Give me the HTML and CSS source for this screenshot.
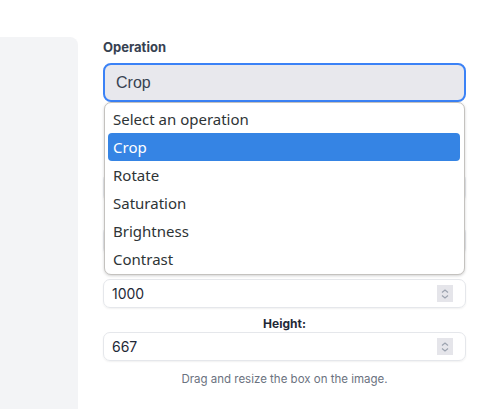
FILE: index.html
```html
<!DOCTYPE html>
<html>
<head>
<meta charset="utf-8">
<link rel="stylesheet" href="styles.css">
</head>
<body>
<div class="page">
  <div class="preview"></div>
  <div class="panel">
    <div class="field-op">
      <div class="op-label">Operation</div>
      <div class="select-wrap">
        <div class="select">Crop</div>
        <ul class="menu">
          <li class="opt">Select an operation</li>
          <li class="opt active">Crop</li>
          <li class="opt">Rotate</li>
          <li class="opt">Saturation</li>
          <li class="opt">Brightness</li>
          <li class="opt">Contrast</li>
        </ul>
      </div>
    </div>
    <div class="fields">
      <div class="group">
        <div class="label"></div>
        <div class="input"></div>
      </div>
      <div class="group">
        <div class="label"></div>
        <div class="input"></div>
      </div>
      <div class="group">
        <div class="label">Width:</div>
        <div class="input"><span>1000</span><span class="spin"><svg viewBox="0 0 16 16" width="16" height="16"><path d="M5 6.5 8 4 11 6.5M5 9.5 8 12 11 9.5" fill="none" stroke="#9ca3af" stroke-width="1.2"/></svg></span></div>
      </div>
      <div class="group">
        <div class="label">Height:</div>
        <div class="input"><span>667</span><span class="spin"><svg viewBox="0 0 16 16" width="16" height="16"><path d="M5 6.5 8 4 11 6.5M5 9.5 8 12 11 9.5" fill="none" stroke="#9ca3af" stroke-width="1.2"/></svg></span></div>
      </div>
      <p class="help">Drag and resize the box on the image.</p>
    </div>
  </div>
</div>
</body>
</html>
```

FILE: styles.css
```css
html, body {
  margin: 0;
  padding: 0;
  background: #ffffff;
  font-family: Inter, "Liberation Sans", sans-serif;
}
.page {
  display: flex;
  height: 409px;
  overflow: hidden;
}
.preview {
  width: 78px;
  margin-top: 37px;
  background: #f3f4f6;
  border-top-right-radius: 8px;
  flex: none;
}
.panel {
  width: 363px;
  margin-left: 25px;
  padding-top: 40px;
  flex: none;
}
.op-label {
  font-size: 13px;
  line-height: 14px;
  font-weight: 700;
  color: #374151;
  margin-bottom: 9px;
}
.select-wrap {
  position: relative;
}
.select {
  height: 35px;
  border: 2px solid #3b82f6;
  border-radius: 8px;
  background: #e8e8ed;
  font-family: "Liberation Sans", Arial, sans-serif;
  font-size: 16px;
  line-height: 35px;
  padding-left: 11px;
  color: #374151;
}
.menu {
  position: absolute;
  z-index: 5;
  left: 1px;
  top: 39px;
  width: 361px;
  margin: 0;
  padding: 2px 4px 2px 3px;
  list-style: none;
  background: #ffffff;
  border: 1px solid #c4c2bf;
  border-radius: 7px;
  box-shadow: 0 1px 3px rgba(0,0,0,0.18);
  box-sizing: border-box;
  height: 173px;
}
.opt {
  font-family: "Noto Sans", "DejaVu Sans", sans-serif;
  font-size: 15px;
  height: 28px;
  line-height: 28px;
  padding-left: 5px;
  color: #2e3436;
  border-radius: 4px;
}
.opt.active {
  background: #3584e4;
  color: #ffffff;
}
.fields {
  margin-top: 57px;
}
.group {
  margin-bottom: 10px;
}
.label {
  text-align: center;
  font-size: 12px;
  line-height: 12px;
  height: 12px;
  font-weight: 700;
  color: #1f2937;
  margin-bottom: 2px;
}
.input {
  height: 29px;
  box-sizing: border-box;
  border: 1px solid #e5e7eb;
  border-radius: 7px;
  box-shadow: 0 1px 2px rgba(0,0,0,0.06);
  display: flex;
  align-items: center;
  justify-content: space-between;
  padding: 0 12px 0 8px;
  font-size: 14px;
  color: #1f2937;
}
.spin {
  width: 16px;
  height: 17px;
  background: #e5e5ea;
  display: flex;
  align-items: center;
}
.help {
  margin: 0;
  text-align: center;
  font-size: 11.5px;
  line-height: 14px;
  color: #6b7280;
  padding-top: 1px;
}
```
